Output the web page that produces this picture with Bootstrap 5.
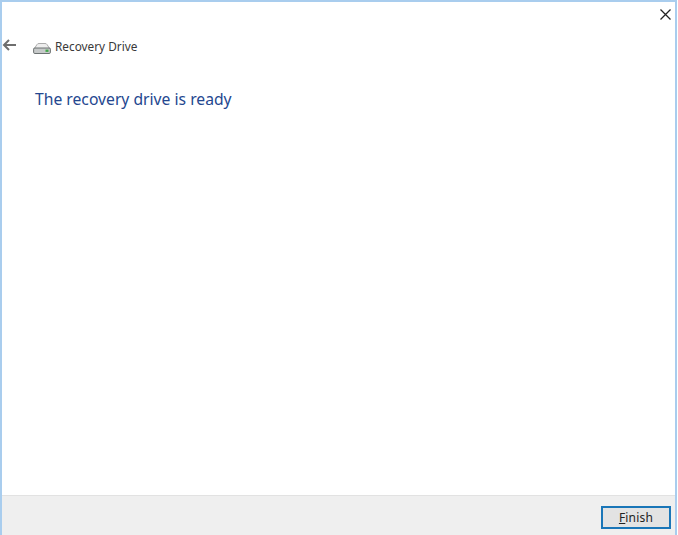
<!DOCTYPE html>
<html lang="en">
<head>
<meta charset="utf-8">
<title>Recovery Drive</title>
<link href="https://cdn.jsdelivr.net/npm/bootstrap@5.3.0/dist/css/bootstrap.min.css" rel="stylesheet">
<style>
html, body { height: 100%; margin: 0; background: #fff; }
body { font-family: "Noto Sans", "Open Sans", sans-serif; overflow: hidden; }
.wiz-frame { height: 535px; width: 677px; border: solid #a9cdee; border-width: 2px 2px 0 2px; background: #fff; }
.wiz-close { width: 13px; height: 13px; margin: 6px 3px 0 0; display: block; }
.wiz-top { height: 29px; }
.wiz-head { height: 30px; padding-left: 0; }
.wiz-back { width: 15px; height: 12px; margin-right: 16px; margin-top: -2px; }
.wiz-drive { width: 18px; height: 12px; margin-right: 4px; margin-top: 3px; }
.wiz-name { font-size: 11.8px; color: #3a3a3a; line-height: 16px; }
.wiz-title { font-size: 15.7px; font-weight: 400; color: #24478f; margin: 27px 0 0 33px; line-height: 22px; }
.wiz-foot { height: 40px; background: #efefef; border-top: 1px solid #e2e2e2; padding: 0 4px 0 0; }
.wiz-btn { width: 70px; height: 23px; padding: 0; border: 2px solid #1a76b8; border-radius: 0; background: #e3e3e3; font-size: 12px; line-height: 18px; color: #222; margin-top: 4px; letter-spacing: .2px; }
.wiz-btn:hover { background: #e3e3e3; color: #222; border-color: #1a76b8; }
</style>
</head>
<body>
<div class="wiz-frame d-flex flex-column">
  <div class="wiz-top d-flex justify-content-end flex-shrink-0">
    <svg class="wiz-close" viewBox="0 0 13 13" aria-label="Close"><path d="M1.500 1.500 11.500 11.500M11.500 1.500 1.500 11.500" stroke="#222" stroke-width="1.300" fill="none"/></svg>
  </div>
  <div class="wiz-head d-flex align-items-center flex-shrink-0">
    <svg class="wiz-back" viewBox="0 0 15 12" aria-label="Back"><path d="M14 6H2M7 1 2 6l5 5" stroke="#6e6e6e" stroke-width="2" fill="none"/></svg>
    <svg class="wiz-drive" viewBox="0 0 18 12" aria-hidden="true">
      <path d="M1 7 4 2.500Q4.500 1.500 6 1.500h6q1.500 0 2 1L17 7z" fill="#eee" stroke="#999" stroke-width=".8"/>
      <rect x=".6" y="6" width="16.800" height="5.500" rx="1.200" fill="#c6c9c9" stroke="#5f6464" stroke-width=".9"/>
      <rect x="12.500" y="7.600" width="3" height="2.300" fill="#43a84a"/>
    </svg>
    <span class="wiz-name">Recovery Drive</span>
  </div>
  <h1 class="wiz-title">The recovery drive is ready</h1>
  <div class="flex-grow-1"></div>
  <div class="wiz-foot d-flex justify-content-end align-items-center flex-shrink-0">
    <button type="button" class="btn wiz-btn"><u>F</u>inish</button>
  </div>
</div>
<script src="https://cdn.jsdelivr.net/npm/bootstrap@5.3.0/dist/js/bootstrap.bundle.min.js"></script>
</body>
</html>
